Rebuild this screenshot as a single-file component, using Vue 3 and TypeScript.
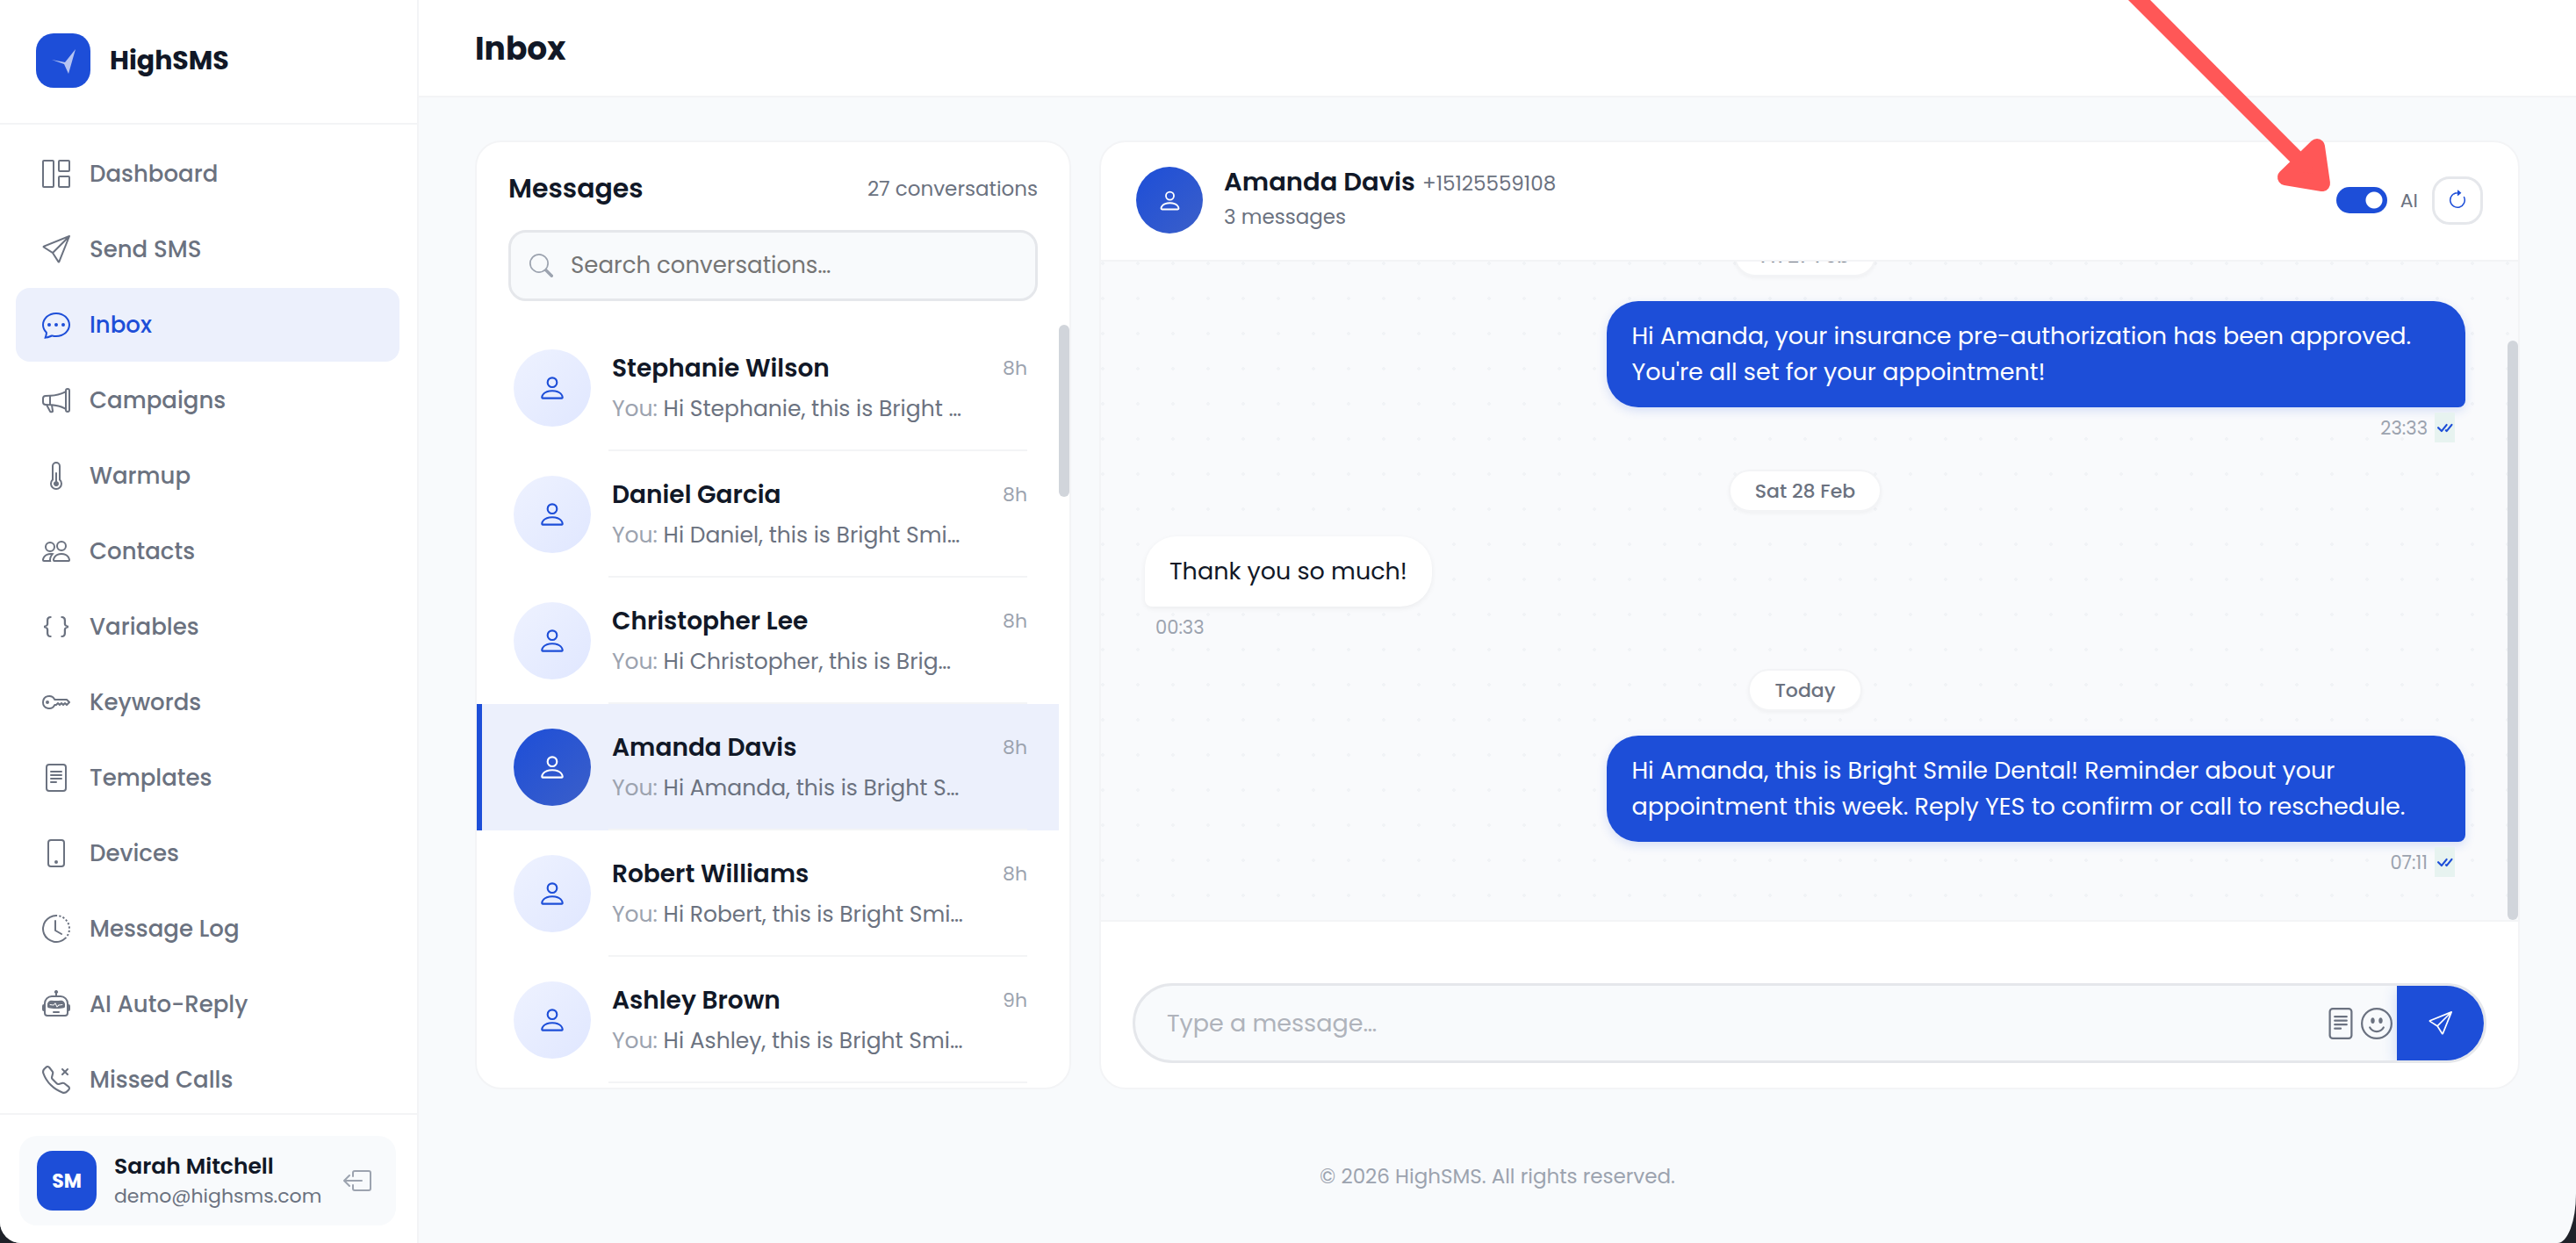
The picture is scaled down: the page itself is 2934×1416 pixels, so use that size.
<script setup lang="ts">
import { ref } from 'vue'

type IconName =
  | 'grid' | 'send' | 'chat' | 'megaphone' | 'thermometer' | 'people' | 'braces' | 'key'
  | 'file' | 'phone' | 'clock' | 'robot' | 'missed' | 'logout' | 'search' | 'person'
  | 'refresh' | 'smile' | 'checks'

const icons: Record<IconName, string> = {
  grid: 'M6 1H1v14h5zm9 0h-5v5h5zm0 9v5h-5v-5zM0 1a1 1 0 0 1 1-1h5a1 1 0 0 1 1 1v14a1 1 0 0 1-1 1H1a1 1 0 0 1-1-1zm9 0a1 1 0 0 1 1-1h5a1 1 0 0 1 1 1v5a1 1 0 0 1-1 1h-5a1 1 0 0 1-1-1zm1 8a1 1 0 0 0-1 1v5a1 1 0 0 0 1 1h5a1 1 0 0 0 1-1v-5a1 1 0 0 0-1-1z',
  send: 'M15.854.146a.5.5 0 0 1 .11.54l-5.819 14.547a.75.75 0 0 1-1.329.124l-3.178-4.995L.643 7.184a.75.75 0 0 1 .124-1.33L15.314.037a.5.5 0 0 1 .54.11ZM6.636 10.07l2.761 4.338L14.13 2.576zm6.787-8.201L1.591 6.602l4.339 2.76z',
  chat: 'M5 8a1 1 0 1 1-2 0 1 1 0 0 1 2 0m4 0a1 1 0 1 1-2 0 1 1 0 0 1 2 0m3 1a1 1 0 1 0 0-2 1 1 0 0 0 0 2M2.165 15.803l.02-.004c1.83-.363 2.948-.842 3.468-1.105A9 9 0 0 0 8 15c4.418 0 8-3.134 8-7s-3.582-7-8-7-8 3.134-8 7c0 1.76.743 3.37 1.97 4.6a10.4 10.4 0 0 1-.524 2.318l-.003.011a11 11 0 0 1-.244.637c-.079.186.074.394.273.362a22 22 0 0 0 .693-.125m.8-3.108a1 1 0 0 0-.287-.801C1.618 10.83 1 9.468 1 8c0-3.192 3.004-6 7-6s7 2.808 7 6-3.004 6-7 6a8 8 0 0 1-2.088-.272 1 1 0 0 0-.711.074c-.387.196-1.24.57-2.634.893a11 11 0 0 0 .398-2',
  megaphone: 'M13 2.5a1.5 1.5 0 0 1 3 0v11a1.5 1.5 0 0 1-3 0v-.214c-2.162-1.241-4.49-1.843-6.912-2.083l.405 2.712A1 1 0 0 1 5.51 15.1h-.548a1 1 0 0 1-.916-.599l-1.85-3.49-.202-.003A2.014 2.014 0 0 1 0 9V7a2.02 2.02 0 0 1 1.992-2.013 75 75 0 0 0 2.483-.075c3.043-.154 6.148-.849 8.525-2.199zm1 0v11a.5.5 0 0 0 1 0v-11a.5.5 0 0 0-1 0m-1 1.35c-2.344 1.205-5.209 1.842-8 2.033v4.233q.27.015.537.036c2.568.189 5.093.744 7.463 1.993zm-9 6.215v-4.13a95 95 0 0 1-1.992.052A1.02 1.02 0 0 0 1 7v2c0 .55.448 1.002 1.006 1.009A61 61 0 0 1 4 10.065m-.657.975 1.609 3.037.01.024h.548l-.002-.014-.443-2.966a68 68 0 0 0-1.722-.082z',
  thermometer: 'M9.5 12.5a1.5 1.5 0 1 1-2-1.415V6.5a.5.5 0 0 1 1 0v4.585a1.5 1.5 0 0 1 1 1.415M5.5 2.5a2.5 2.5 0 0 1 5 0v7.55a3.5 3.5 0 1 1-5 0zM8 1a1.5 1.5 0 0 0-1.5 1.5v7.987l-.167.15a2.5 2.5 0 1 0 3.333 0l-.166-.15V2.5A1.5 1.5 0 0 0 8 1',
  people: 'M15 14s1 0 1-1-1-4-5-4-5 3-5 4 1 1 1 1zm-7.978-1L7 12.996c.001-.264.167-1.03.76-1.72C8.312 10.629 9.282 10 11 10c1.717 0 2.687.63 3.24 1.276.593.69.758 1.457.76 1.72l-.008.002-.014.002zM11 7a2 2 0 1 0 0-4 2 2 0 0 0 0 4m3-2a3 3 0 1 1-6 0 3 3 0 0 1 6 0M6.936 9.28a6 6 0 0 0-1.23-.247A7 7 0 0 0 5 9c-4 0-5 3-5 4q0 1 1 1h4.216A2.24 2.24 0 0 1 5 13c0-1.01.377-2.042 1.09-2.904.243-.294.526-.569.846-.816M4.92 10A5.5 5.5 0 0 0 4 13H1c0-.26.164-1.03.76-1.724.545-.636 1.492-1.256 3.16-1.275ZM1.5 5.5a3 3 0 1 1 6 0 3 3 0 0 1-6 0m3-2a2 2 0 1 0 0 4 2 2 0 0 0 0-4',
  braces: 'M2.114 8.063V7.9c1.005-.102 1.497-.615 1.497-1.6V4.503c0-1.094.39-1.538 1.354-1.538h.273V2h-.376C3.25 2 2.49 2.759 2.49 4.352v1.524c0 1.094-.376 1.456-1.49 1.456v1.299c1.114 0 1.49.362 1.49 1.456v1.524c0 1.593.759 2.352 2.372 2.352h.376v-.964h-.273c-.964 0-1.354-.444-1.354-1.538V9.663c0-.984-.492-1.497-1.497-1.6M13.886 7.9v.163c-1.005.103-1.497.616-1.497 1.6v1.798c0 1.094-.39 1.538-1.354 1.538h-.273v.964h.376c1.613 0 2.372-.759 2.372-2.352v-1.524c0-1.094.376-1.456 1.49-1.456V7.332c-1.114 0-1.49-.362-1.49-1.456V4.352C13.51 2.759 12.75 2 11.138 2h-.376v.964h.273c.964 0 1.354.444 1.354 1.538V6.3c0 .984.492 1.497 1.497 1.6',
  key: 'M0 8a4 4 0 0 1 7.465-2H14a.5.5 0 0 1 .354.146l1.5 1.5a.5.5 0 0 1 0 .708l-1.5 1.5a.5.5 0 0 1-.708 0L13 9.207l-.646.647a.5.5 0 0 1-.708 0L11 9.207l-.646.647a.5.5 0 0 1-.708 0L9 9.207l-.646.647A.5.5 0 0 1 8 10h-.535A4 4 0 0 1 0 8m4-3a3 3 0 1 0 2.712 4.285A.5.5 0 0 1 7.163 9h.63l.853-.854a.5.5 0 0 1 .708 0l.646.647.646-.647a.5.5 0 0 1 .708 0l.646.647.646-.647a.5.5 0 0 1 .708 0l.646.647.793-.793-1-1h-6.63a.5.5 0 0 1-.451-.285A3 3 0 0 0 4 5M4 8a1 1 0 1 1-2 0 1 1 0 0 1 2 0',
  file: 'M5 4a.5.5 0 0 0 0 1h6a.5.5 0 0 0 0-1zm-.5 2.5A.5.5 0 0 1 5 6h6a.5.5 0 0 1 0 1H5a.5.5 0 0 1-.5-.5M5 8a.5.5 0 0 0 0 1h6a.5.5 0 0 0 0-1zm0 2a.5.5 0 0 0 0 1h3a.5.5 0 0 0 0-1zM2 2a2 2 0 0 1 2-2h8a2 2 0 0 1 2 2v12a2 2 0 0 1-2 2H4a2 2 0 0 1-2-2zm10-1H4a1 1 0 0 0-1 1v12a1 1 0 0 0 1 1h8a1 1 0 0 0 1-1V2a1 1 0 0 0-1-1',
  phone: 'M11 1a1 1 0 0 1 1 1v12a1 1 0 0 1-1 1H5a1 1 0 0 1-1-1V2a1 1 0 0 1 1-1zM5 0a2 2 0 0 0-2 2v12a2 2 0 0 0 2 2h6a2 2 0 0 0 2-2V2a2 2 0 0 0-2-2zM8 14a1 1 0 1 0 0-2 1 1 0 0 0 0 2',
  clock: 'M8.515 1.019A7 7 0 0 0 8 1V0a8 8 0 0 1 .589.022zm2.004.45a7 7 0 0 0-.985-.299l.219-.976q.576.129 1.126.342zm1.37.71a7 7 0 0 0-.439-.27l.493-.87a8 8 0 0 1 .979.654l-.615.789a7 7 0 0 0-.418-.302zm1.834 1.79a7 7 0 0 0-.653-.796l.724-.69q.406.429.747.91zm.744 1.352a7 7 0 0 0-.214-.468l.893-.45a8 8 0 0 1 .45 1.088l-.95.313a7 7 0 0 0-.179-.483m.53 2.507a7 7 0 0 0-.1-1.025l.985-.17q.1.58.116 1.17zm-.131 1.538q.05-.254.081-.51l.993.123a8 8 0 0 1-.23 1.155l-.964-.267q.069-.247.12-.501m-.952 2.379q.276-.436.486-.908l.914.405q-.24.54-.555 1.038zm-.964 1.205q.183-.183.35-.378l.758.653a8 8 0 0 1-.401.432zM8 1a7 7 0 1 0 4.95 11.95l.707.707A8.001 8.001 0 1 1 8 0zM7.5 3a.5.5 0 0 1 .5.5v5.21l3.248 1.856a.5.5 0 0 1-.496.868l-3.5-2A.5.5 0 0 1 7 9V3.5a.5.5 0 0 1 .5-.5',
  robot: 'M6 12.5a.5.5 0 0 1 .5-.5h3a.5.5 0 0 1 0 1h-3a.5.5 0 0 1-.5-.5M3 8.062C3 6.76 4.235 5.765 5.53 5.886a26.6 26.6 0 0 0 4.94 0C11.765 5.765 13 6.76 13 8.062v1.157a.93.93 0 0 1-.765.935c-.845.147-2.34.346-4.235.346s-3.39-.2-4.235-.346A.93.93 0 0 1 3 9.219zm4.542-.827a.25.25 0 0 0-.217.068l-.92.9a25 25 0 0 1-1.871-.183.25.25 0 0 0-.068.495c.55.076 1.232.149 2.02.193a.25.25 0 0 0 .189-.071l.754-.736.847 1.71a.25.25 0 0 0 .404.062l.932-.97a25 25 0 0 0 1.922-.188.25.25 0 0 0-.068-.495c-.538.074-1.207.145-1.98.189a.25.25 0 0 0-.166.076l-.754.785-.842-1.7a.25.25 0 0 0-.182-.135M8.5 1.866a1 1 0 1 0-1 0V3h-2A4.5 4.5 0 0 0 1 7.5V8a1 1 0 0 0-1 1v2a1 1 0 0 0 1 1v1a2 2 0 0 0 2 2h10a2 2 0 0 0 2-2v-1a1 1 0 0 0 1-1V9a1 1 0 0 0-1-1v-.5A4.5 4.5 0 0 0 10.5 3h-2zM14 7.5V13a1 1 0 0 1-1 1H3a1 1 0 0 1-1-1V7.5A3.5 3.5 0 0 1 5.5 4h5A3.5 3.5 0 0 1 14 7.5',
  missed: 'M3.654 1.328a.678.678 0 0 0-1.015-.063L1.605 2.3c-.483.484-.661 1.169-.45 1.77a17.6 17.6 0 0 0 4.168 6.608 17.6 17.6 0 0 0 6.608 4.168c.601.211 1.286.033 1.77-.45l1.034-1.034a.678.678 0 0 0-.063-1.015l-2.307-1.794a.68.68 0 0 0-.58-.122l-2.19.547a1.75 1.75 0 0 1-1.657-.459L5.482 8.062a1.75 1.75 0 0 1-.46-1.657l.548-2.19a.68.68 0 0 0-.122-.58zM1.884.511a1.745 1.745 0 0 1 2.612.163L6.29 2.98c.329.423.445.974.315 1.494l-.547 2.19a.68.68 0 0 0 .178.643l2.457 2.457a.68.68 0 0 0 .644.178l2.189-.547a1.75 1.75 0 0 1 1.494.315l2.306 1.794c.829.645.905 1.87.163 2.611l-1.034 1.034c-.74.74-1.846 1.065-2.877.702a18.6 18.6 0 0 1-7.01-4.42 18.6 18.6 0 0 1-4.42-7.009c-.362-1.03-.037-2.137.703-2.877zM11.146 1.646a.5.5 0 0 1 .708 0L13 2.793l1.146-1.147a.5.5 0 0 1 .708.708L13.707 3.5l1.147 1.146a.5.5 0 0 1-.708.708L13 4.207l-1.146 1.147a.5.5 0 0 1-.708-.708L12.293 3.5l-1.147-1.146a.5.5 0 0 1 0-.708',
  logout: 'M6 12.5a.5.5 0 0 0 .5.5h8a.5.5 0 0 0 .5-.5v-9a.5.5 0 0 0-.5-.5h-8a.5.5 0 0 0-.5.5v2a.5.5 0 0 1-1 0v-2A1.5 1.5 0 0 1 6.5 2h8A1.5 1.5 0 0 1 16 3.5v9a1.5 1.5 0 0 1-1.5 1.5h-8A1.5 1.5 0 0 1 5 12.5v-2a.5.5 0 0 1 1 0zM.146 8.354a.5.5 0 0 1 0-.708l3-3a.5.5 0 1 1 .708.708L1.707 7.5H10.5a.5.5 0 0 1 0 1H1.707l2.147 2.146a.5.5 0 0 1-.708.708z',
  search: 'M11.742 10.344a6.5 6.5 0 1 0-1.397 1.398h-.001q.044.06.098.115l3.85 3.85a1 1 0 0 0 1.415-1.414l-3.85-3.85a1 1 0 0 0-.115-.1zM12 6.5a5.5 5.5 0 1 1-11 0 5.5 5.5 0 0 1 11 0',
  person: 'M8 8a3 3 0 1 0 0-6 3 3 0 0 0 0 6m2-3a2 2 0 1 1-4 0 2 2 0 0 1 4 0m4 8c0 1-1 1-1 1H3s-1 0-1-1 1-4 6-4 6 3 6 4m-1-.004c-.001-.246-.154-.986-.832-1.664C11.516 10.68 10.289 10 8 10s-3.516.68-4.168 1.332c-.678.678-.83 1.418-.832 1.664z',
  refresh: 'M8 3a5 5 0 1 0 4.546 2.914.5.5 0 0 1 .908-.417A6 6 0 1 1 8 2zM8 4.466V.534a.25.25 0 0 1 .41-.192l2.36 1.966c.12.1.12.284 0 .384L8.41 4.658A.25.25 0 0 1 8 4.466',
  smile: 'M8 15A7 7 0 1 1 8 1a7 7 0 0 1 0 14m0 1A8 8 0 1 0 8 0a8 8 0 0 0 0 16M4.285 9.567a.5.5 0 0 1 .683.183A3.5 3.5 0 0 0 8 11.5a3.5 3.5 0 0 0 3.032-1.75.5.5 0 1 1 .866.5A4.5 4.5 0 0 1 8 12.5a4.5 4.5 0 0 1-3.898-2.25.5.5 0 0 1 .183-.683M7 6.5C7 7.328 6.552 8 6 8s-1-.672-1-1.5S5.448 5 6 5s1 .672 1 1.5m4 0c0 .828-.448 1.5-1 1.5s-1-.672-1-1.5S9.448 5 10 5s1 .672 1 1.5',
  checks: 'M8.97 4.97a.75.75 0 0 1 1.07 1.05l-3.99 4.99a.75.75 0 0 1-1.08.02L2.324 8.384a.75.75 0 1 1 1.06-1.06l2.094 2.093L8.95 4.992zm-.92 5.14.92.92a.75.75 0 0 0 1.079-.02l3.992-4.99a.75.75 0 1 0-1.091-1.028L9.477 9.417l-.485-.486z',
}

const navItems: { label: string; icon: IconName }[] = [
  { label: 'Dashboard', icon: 'grid' },
  { label: 'Send SMS', icon: 'send' },
  { label: 'Inbox', icon: 'chat' },
  { label: 'Campaigns', icon: 'megaphone' },
  { label: 'Warmup', icon: 'thermometer' },
  { label: 'Contacts', icon: 'people' },
  { label: 'Variables', icon: 'braces' },
  { label: 'Keywords', icon: 'key' },
  { label: 'Templates', icon: 'file' },
  { label: 'Devices', icon: 'phone' },
  { label: 'Message Log', icon: 'clock' },
  { label: 'AI Auto-Reply', icon: 'robot' },
  { label: 'Missed Calls', icon: 'missed' },
]
const activeNav = ref('Inbox')

const conversations = [
  { name: 'Stephanie Wilson', preview: 'Hi Stephanie, this is Bright …', time: '8h' },
  { name: 'Daniel Garcia', preview: 'Hi Daniel, this is Bright Smi…', time: '8h' },
  { name: 'Christopher Lee', preview: 'Hi Christopher, this is Brig…', time: '8h' },
  { name: 'Amanda Davis', preview: 'Hi Amanda, this is Bright S…', time: '8h' },
  { name: 'Robert Williams', preview: 'Hi Robert, this is Bright Smi…', time: '8h' },
  { name: 'Ashley Brown', preview: 'Hi Ashley, this is Bright Smi…', time: '9h' },
]
const selected = ref('Amanda Davis')

const days = [
  {
    label: 'Fri 27 Feb',
    outgoing: true,
    text: "Hi Amanda, your insurance pre-authorization has been approved. You're all set for your appointment!",
    time: '23:33',
  },
  { label: 'Sat 28 Feb', outgoing: false, text: 'Thank you so much!', time: '00:33' },
  {
    label: 'Today',
    outgoing: true,
    text: 'Hi Amanda, this is Bright Smile Dental! Reminder about your appointment this week. Reply YES to confirm or call to reschedule.',
    time: '07:11',
  },
]

const query = ref('')
const draft = ref('')
const aiEnabled = ref(true)
</script>

<template>
  <div class="app">
    <aside class="sidebar">
      <div class="brand">
        <svg class="logo" viewBox="0 0 62 62" aria-hidden="true">
          <rect width="62" height="62" rx="20" fill="#1d4ed8" />
          <path d="M45 18 37 46 32 35 18 30 33 33z" fill="#b6c5f2" />
        </svg>
        <span class="brand-name">HighSMS</span>
      </div>
      <nav class="nav">
        <a
          v-for="item in navItems"
          :key="item.label"
          href="#"
          class="nav-item"
          :class="{ active: item.label === activeNav }"
          @click.prevent="activeNav = item.label"
        >
          <svg class="icon-nav" viewBox="0 0 16 16" aria-hidden="true"><path :d="icons[item.icon]" /></svg>
          <span>{{ item.label }}</span>
        </a>
      </nav>
      <div class="account">
        <div class="account-card">
          <div class="initials">SM</div>
          <div class="account-text">
            <div class="account-name">Sarah Mitchell</div>
            <div class="account-mail">demo@highsms.com</div>
          </div>
          <button class="logout" type="button" aria-label="Log out">
            <svg class="icon-nav" viewBox="0 0 16 16" aria-hidden="true"><path :d="icons.logout" /></svg>
          </button>
        </div>
      </div>
    </aside>

    <div class="page">
      <header class="topbar"><h1>Inbox</h1></header>

      <main class="panels">
        <section class="panel list-panel">
          <div class="list-head">
            <div class="list-title">
              <h2>Messages</h2>
              <span class="count">27 conversations</span>
            </div>
            <label class="search">
              <svg class="icon-search" viewBox="0 0 16 16" aria-hidden="true"><path :d="icons.search" /></svg>
              <input v-model="query" type="text" aria-label="Search conversations" placeholder="Search conversations…" />
            </label>
          </div>
          <div class="scroll-area">
            <div class="rows">
              <button
                v-for="c in conversations"
                :key="c.name"
                type="button"
                class="row"
                :class="{ selected: c.name === selected }"
                @click="selected = c.name"
              >
                <span class="avatar">
                  <svg viewBox="0 0 16 16" aria-hidden="true"><path :d="icons.person" /></svg>
                </span>
                <span class="row-text">
                  <span class="row-top">
                    <span class="row-name">{{ c.name }}</span>
                    <span class="row-time">{{ c.time }}</span>
                  </span>
                  <span class="row-preview"><span class="you">You:</span> {{ c.preview }}</span>
                </span>
              </button>
            </div>
            <div class="track"><div class="thumb thumb-list"></div></div>
          </div>
        </section>

        <section class="panel chat-panel">
          <div class="chat-head">
            <span class="avatar avatar-head">
              <svg viewBox="0 0 16 16" aria-hidden="true"><path :d="icons.person" /></svg>
            </span>
            <div class="contact">
              <div class="contact-line">
                <h3>Amanda Davis</h3>
                <span class="contact-phone">+15125559108</span>
              </div>
              <div class="contact-sub">3 messages</div>
            </div>
            <label class="toggle">
              <input v-model="aiEnabled" type="checkbox" />
              <span>AI</span>
            </label>
            <button class="refresh" type="button" aria-label="Refresh">
              <svg viewBox="0 0 16 16" aria-hidden="true"><path :d="icons.refresh" /></svg>
            </button>
          </div>

          <div class="thread-area">
            <div class="thread">
              <template v-for="d in days" :key="d.label">
                <div class="day">{{ d.label }}</div>
                <div class="message" :class="{ outgoing: d.outgoing }">
                  <div class="bubble">{{ d.text }}</div>
                  <div class="meta">
                    <span>{{ d.time }}</span>
                    <span v-if="d.outgoing" class="receipt">
                      <svg viewBox="0 0 16 16" aria-hidden="true"><path :d="icons.checks" /></svg>
                    </span>
                  </div>
                </div>
              </template>
            </div>
            <div class="track track-end"><div class="thumb thumb-thread"></div></div>
          </div>

          <form class="composer" @submit.prevent>
            <div class="composer-box">
              <input v-model="draft" type="text" aria-label="Message" placeholder="Type a message…" />
              <button class="tool" type="button" aria-label="Insert template">
                <svg viewBox="0 0 16 16" aria-hidden="true"><path :d="icons.file" /></svg>
              </button>
              <button class="tool" type="button" aria-label="Insert emoji">
                <svg viewBox="0 0 16 16" aria-hidden="true"><path :d="icons.smile" /></svg>
              </button>
              <button class="send" type="submit" aria-label="Send">
                <svg viewBox="0 0 16 16" aria-hidden="true"><path :d="icons.send" /></svg>
              </button>
            </div>
          </form>
        </section>
      </main>

      <footer class="footer">© 2026 HighSMS. All rights reserved.</footer>
    </div>

    <svg class="pointer" viewBox="0 0 240 224" aria-hidden="true">
      <path d="M4 0H29L215 187 204 200z" />
      <path class="pointer-head" d="M219 167 225 209 183 202z" />
    </svg>
  </div>
</template>

<style>
body {
  margin: 0;
  background: #1f2229;
}
</style>

<style scoped>
* {
  box-sizing: border-box;
}
.app {
  position: relative;
  display: flex;
  height: 100vh;
  min-height: 1000px;
  overflow: hidden;
  background: #f8fafc;
  border-radius: 0 0 21px 24px / 0 0 56px 24px;
  font-family: Poppins, Inter, 'Noto Sans', sans-serif;
  color: #111827;
}
svg {
  display: block;
  fill: currentColor;
}
button {
  padding: 0;
  border: 0;
  background: none;
  font: inherit;
  color: inherit;
  text-align: left;
  cursor: pointer;
}
h1,
h2,
h3 {
  margin: 0;
}
.sidebar {
  display: flex;
  flex-direction: column;
  flex: 0 0 477px;
  background: #fff;
  border-right: 2px solid #f3f4f6;
}
.brand {
  display: flex;
  align-items: center;
  gap: 22px;
  height: 142px;
  padding: 0 41px 2px;
  border-bottom: 2px solid #f3f4f6;
}
.logo {
  width: 62px;
  height: 62px;
}
.brand-name {
  font-size: 30px;
  font-weight: 700;
}
.nav {
  display: flex;
  flex: 1 1 0;
  flex-direction: column;
  gap: 2px;
  min-height: 0;
  overflow: hidden;
  padding: 14px 20px 0 18px;
}
.nav-item {
  display: flex;
  flex: 0 0 84px;
  align-items: center;
  gap: 22px;
  padding: 0 30px;
  border-radius: 16px;
  color: #6b7280;
  font-size: 26px;
  font-weight: 500;
  text-decoration: none;
}
.nav-item.active {
  background: #ecf0fc;
  color: #1d4ed8;
}
.icon-nav {
  width: 32px;
  height: 32px;
}
.account {
  padding: 24px 24px 20px 22px;
  border-top: 2px solid #f3f4f6;
}
.account-card {
  display: flex;
  align-items: center;
  height: 102px;
  padding: 0 28px 0 20px;
  border-radius: 20px;
  background: #f8fafc;
}
.initials {
  display: grid;
  flex: none;
  place-items: center;
  width: 68px;
  height: 68px;
  margin-right: 20px;
  border-radius: 18px;
  background: #1d4ed8;
  color: #fff;
  font-size: 22px;
  font-weight: 700;
}
.account-text {
  flex: 1;
  min-width: 0;
}
.account-name {
  font-size: 25px;
  font-weight: 600;
  line-height: 36px;
}
.account-mail {
  color: #6b7280;
  font-size: 22px;
  line-height: 32px;
}
.logout {
  color: #9ca3af;
}
.page {
  display: flex;
  flex: 1 1 0;
  flex-direction: column;
  min-width: 0;
}
.topbar {
  display: flex;
  align-items: center;
  flex: 0 0 111px;
  padding: 2px 64px 0;
  background: #fff;
  border-bottom: 2px solid #f3f4f6;
}
.topbar h1 {
  font-size: 36px;
  font-weight: 700;
}
.panels {
  display: flex;
  flex: 1 1 0;
  gap: 32px;
  min-height: 0;
  padding: 49px 64px 0;
}
.panel {
  display: flex;
  flex-direction: column;
  min-width: 0;
  overflow: hidden;
  background: #fff;
  border: 2px solid #f3f4f6;
  border-radius: 30px;
}
.list-panel {
  flex: 0 0 679px;
}
.chat-panel {
  flex: 1 1 0;
}
.list-head {
  padding: 33px 36px 27px;
}
.list-title {
  display: flex;
  align-items: center;
  justify-content: space-between;
  height: 40px;
  margin-bottom: 27px;
}
.list-title h2 {
  font-size: 30px;
  font-weight: 600;
}
.count {
  color: #6b7280;
  font-size: 23px;
}
.search {
  display: flex;
  align-items: center;
  gap: 20px;
  height: 81px;
  padding: 0 21px;
  border: 3px solid #e5e7eb;
  border-radius: 20px;
  background: #f8fafc;
}
.icon-search {
  width: 27px;
  height: 27px;
  color: #9ca3af;
}
input[type='text'] {
  flex: 1;
  min-width: 0;
  padding: 0;
  border: 0;
  outline: 0;
  background: none;
  color: #111827;
  font-family: inherit;
  font-size: 27px;
}
.search input[type='text'] {
  font-size: 26px;
}
.search input::placeholder {
  color: #757575;
}
.scroll-area,
.thread-area {
  display: flex;
  flex: 1 1 0;
  min-height: 0;
}
.rows {
  flex: 1;
  min-width: 0;
  overflow: hidden;
}
.track {
  display: flex;
  flex: 0 0 12px;
  flex-direction: column;
}
.track-end {
  justify-content: flex-end;
}
.thumb {
  border-radius: 6px;
  background: #d1d5db;
}
.thumb-list {
  height: 22.5%;
}
.thumb-thread {
  height: 88%;
}
.row {
  position: relative;
  display: flex;
  align-items: center;
  gap: 24px;
  width: 100%;
  height: 144px;
  padding: 0 36px;
  border-left: 6px solid transparent;
}
.row::after {
  position: absolute;
  right: 36px;
  bottom: 0;
  left: 144px;
  height: 2px;
  background: #f3f4f6;
  content: '';
}
.row.selected {
  border-left-color: #1d4ed8;
  background: #ecf0fc;
}
.avatar {
  display: grid;
  flex: none;
  place-items: center;
  width: 88px;
  height: 88px;
  border-radius: 50%;
  background: linear-gradient(135deg, #eef2ff, #e0e7ff);
  color: #1d4ed8;
}
.avatar svg {
  width: 34px;
  height: 34px;
}
.selected .avatar,
.avatar-head {
  background: linear-gradient(135deg, #1d4ed8, #3b5fc9);
  color: #fff;
}
.avatar-head {
  width: 76px;
  height: 76px;
}
.avatar-head svg {
  width: 29px;
  height: 29px;
}
.row-text {
  flex: 1;
  min-width: 0;
  padding-top: 2px;
}
.row-top {
  display: flex;
  align-items: center;
  justify-content: space-between;
  line-height: 46px;
}
.row-name {
  font-size: 28px;
  font-weight: 600;
}
.row-time {
  color: #9ca3af;
  font-size: 22px;
}
.row-preview {
  display: block;
  overflow: hidden;
  color: #6b7280;
  font-size: 25px;
  line-height: 46px;
  white-space: nowrap;
}
.you {
  color: #9ca3af;
}
.chat-head {
  display: flex;
  align-items: center;
  padding: 26px 40px 28px;
  border-bottom: 2px solid #f3f4f6;
}
.contact {
  flex: 1;
  padding: 0 0 2px 24px;
}
.contact-line {
  display: flex;
  align-items: baseline;
  gap: 8px;
  line-height: 38px;
}
.contact h3 {
  font-size: 29px;
  font-weight: 600;
}
.contact-phone,
.contact-sub {
  color: #6b7280;
  font-size: 23px;
}
.contact-sub {
  line-height: 38px;
}
.toggle {
  display: flex;
  align-items: center;
  gap: 15px;
  margin-right: 16px;
  color: #6b7280;
  font-size: 22px;
}
.toggle input {
  width: 58px;
  height: 30px;
  margin: 0;
  appearance: none;
  border-radius: 15px;
  background: #d1d5db radial-gradient(circle at 15px 15px, #fff 9px, transparent 10px);
}
.toggle input:checked {
  background: #1d4ed8 radial-gradient(circle at 43px 15px, #fff 9px, transparent 10px);
}
.refresh {
  display: grid;
  place-items: center;
  width: 58px;
  height: 55px;
  border: 3px solid #e5e7eb;
  border-radius: 20px;
  color: #1d4ed8;
}
.refresh svg {
  width: 24px;
  height: 24px;
}
.thread-area {
  background: #f9fafc radial-gradient(circle at 2px 2px, #f1f3f6 2px, transparent 2px) 0 0 / 40px 40px;
}
.thread {
  display: flex;
  flex: 1;
  flex-direction: column;
  align-items: flex-start;
  justify-content: flex-end;
  min-width: 0;
  overflow: hidden;
  padding: 0 48px 49px 50px;
}
.day {
  flex: none;
  align-self: center;
  margin: 31px 0 28px;
  padding: 2px 28px 0;
  border: 2px solid #f3f4f6;
  border-radius: 24px;
  background: #fff;
  box-shadow: 0 2px 4px rgb(0 0 0 / 4%);
  color: #6b7280;
  font-size: 22px;
  font-weight: 500;
  line-height: 42px;
}
.message {
  display: flex;
  flex: none;
  flex-direction: column;
  align-items: flex-start;
  max-width: 65%;
}
.message.outgoing {
  align-items: flex-end;
  align-self: flex-end;
}
.bubble {
  padding: 19px 28px 20px;
  border-radius: 36px 36px 36px 8px;
  background: #fff;
  box-shadow: 0 2px 6px rgb(0 0 0 / 6%);
  font-size: 27px;
  line-height: 41px;
}
.outgoing .bubble {
  border-radius: 36px 36px 8px 36px;
  background: #1d4ed8;
  box-shadow: 0 4px 12px rgb(29 78 216 / 16%);
  color: #fff;
}
.meta {
  display: flex;
  align-items: center;
  gap: 8px;
  height: 34px;
  margin: 6px 12px 0;
  color: #9ca3af;
  font-size: 21px;
}
.receipt {
  display: grid;
  place-items: center;
  height: 34px;
  background: #e7f3f0;
  color: #1d4ed8;
}
.receipt svg {
  width: 23px;
  height: 23px;
}
.composer {
  padding: 70px 36px 28px;
  border-top: 2px solid #f3f4f6;
}
.composer-box {
  display: flex;
  align-items: center;
  height: 91px;
  padding-left: 36px;
  overflow: hidden;
  border: 3px solid #e5e7eb;
  border-radius: 46px;
  background: #f8fafc;
}
.composer-box input::placeholder {
  color: #afb3bb;
}
.tool {
  margin-right: 5px;
  color: #6b7280;
}
.tool svg {
  width: 36px;
  height: 36px;
}
.send {
  display: grid;
  place-items: center;
  align-self: stretch;
  width: 99px;
  background: #1d4ed8;
  box-shadow: 0 4px 16px rgb(29 78 216 / 20%);
  color: #fff;
}
.send svg {
  width: 27px;
  height: 27px;
}
.footer {
  flex: 0 0 175px;
  padding-top: 80px;
  color: #9ca3af;
  font-size: 23px;
  line-height: 38px;
  text-align: center;
}
.pointer {
  position: absolute;
  top: 0;
  right: 274px;
  width: 240px;
  height: 224px;
  fill: #ff5757;
  pointer-events: none;
}
.pointer-head {
  stroke: #ff5757;
  stroke-width: 18px;
  stroke-linejoin: round;
}
</style>
